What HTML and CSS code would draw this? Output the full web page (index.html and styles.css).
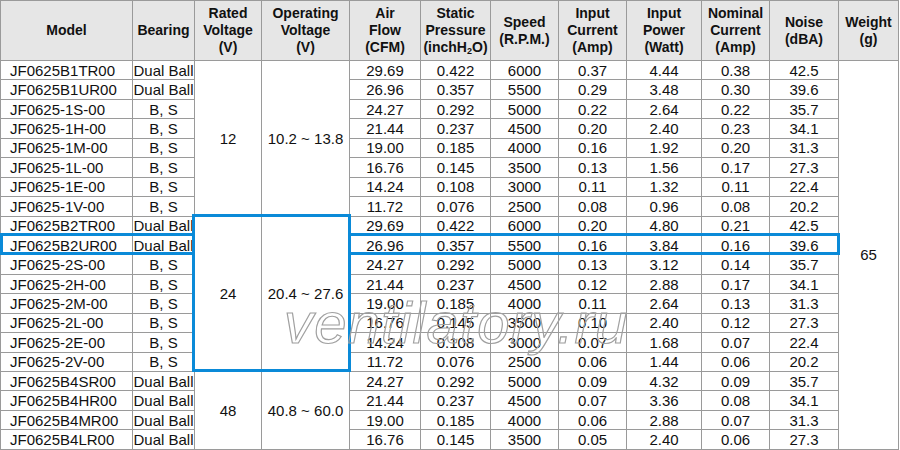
FILE: index.html
```html
<!DOCTYPE html>
<html>
<head>
<meta charset="utf-8">
<link rel="stylesheet" href="styles.css">
</head>
<body>
<div class="wrap">
<table class="spec">
<colgroup>
<col class="c-model"><col class="c-bear"><col class="c-rv"><col class="c-ov"><col class="c-af"><col class="c-sp"><col class="c-spd"><col class="c-ic"><col class="c-ip"><col class="c-nc"><col class="c-noise"><col class="c-w">
</colgroup>
<thead>
<tr>
<th>Model</th>
<th>Bearing</th>
<th>Rated<br>Voltage<br>(V)</th>
<th>Operating<br>Voltage<br>(V)</th>
<th>Air<br>Flow<br>(CFM)</th>
<th>Static<br>Pressure<br>(inchH<sub>2</sub>O)</th>
<th>Speed<br>(R.P.M.)</th>
<th>Input<br>Current<br>(Amp)</th>
<th>Input<br>Power<br>(Watt)</th>
<th>Nominal<br>Current<br>(Amp)</th>
<th>Noise<br>(dBA)</th>
<th>Weight<br>(g)</th>
</tr>
</thead>
<tbody>
<tr><td class="m">JF0625B1TR00</td><td>Dual Ball</td><td rowspan="8">12</td><td rowspan="8">10.2 ~ 13.8</td><td>29.69</td><td>0.422</td><td>6000</td><td>0.37</td><td>4.44</td><td>0.38</td><td>42.5</td><td rowspan="20">65</td></tr>
<tr><td class="m">JF0625B1UR00</td><td>Dual Ball</td><td>26.96</td><td>0.357</td><td>5500</td><td>0.29</td><td>3.48</td><td>0.30</td><td>39.6</td></tr>
<tr><td class="m">JF0625-1S-00</td><td>B, S</td><td>24.27</td><td>0.292</td><td>5000</td><td>0.22</td><td>2.64</td><td>0.22</td><td>35.7</td></tr>
<tr><td class="m">JF0625-1H-00</td><td>B, S</td><td>21.44</td><td>0.237</td><td>4500</td><td>0.20</td><td>2.40</td><td>0.23</td><td>34.1</td></tr>
<tr><td class="m">JF0625-1M-00</td><td>B, S</td><td>19.00</td><td>0.185</td><td>4000</td><td>0.16</td><td>1.92</td><td>0.20</td><td>31.3</td></tr>
<tr><td class="m">JF0625-1L-00</td><td>B, S</td><td>16.76</td><td>0.145</td><td>3500</td><td>0.13</td><td>1.56</td><td>0.17</td><td>27.3</td></tr>
<tr><td class="m">JF0625-1E-00</td><td>B, S</td><td>14.24</td><td>0.108</td><td>3000</td><td>0.11</td><td>1.32</td><td>0.11</td><td>22.4</td></tr>
<tr><td class="m">JF0625-1V-00</td><td>B, S</td><td>11.72</td><td>0.076</td><td>2500</td><td>0.08</td><td>0.96</td><td>0.08</td><td>20.2</td></tr>
<tr><td class="m">JF0625B2TR00</td><td>Dual Ball</td><td rowspan="8">24</td><td rowspan="8">20.4 ~ 27.6</td><td>29.69</td><td>0.422</td><td>6000</td><td>0.20</td><td>4.80</td><td>0.21</td><td>42.5</td></tr>
<tr><td class="m">JF0625B2UR00</td><td>Dual Ball</td><td>26.96</td><td>0.357</td><td>5500</td><td>0.16</td><td>3.84</td><td>0.16</td><td>39.6</td></tr>
<tr><td class="m">JF0625-2S-00</td><td>B, S</td><td>24.27</td><td>0.292</td><td>5000</td><td>0.13</td><td>3.12</td><td>0.14</td><td>35.7</td></tr>
<tr><td class="m">JF0625-2H-00</td><td>B, S</td><td>21.44</td><td>0.237</td><td>4500</td><td>0.12</td><td>2.88</td><td>0.17</td><td>34.1</td></tr>
<tr><td class="m">JF0625-2M-00</td><td>B, S</td><td>19.00</td><td>0.185</td><td>4000</td><td>0.11</td><td>2.64</td><td>0.13</td><td>31.3</td></tr>
<tr><td class="m">JF0625-2L-00</td><td>B, S</td><td>16.76</td><td>0.145</td><td>3500</td><td>0.10</td><td>2.40</td><td>0.12</td><td>27.3</td></tr>
<tr><td class="m">JF0625-2E-00</td><td>B, S</td><td>14.24</td><td>0.108</td><td>3000</td><td>0.07</td><td>1.68</td><td>0.07</td><td>22.4</td></tr>
<tr><td class="m">JF0625-2V-00</td><td>B, S</td><td>11.72</td><td>0.076</td><td>2500</td><td>0.06</td><td>1.44</td><td>0.06</td><td>20.2</td></tr>
<tr><td class="m">JF0625B4SR00</td><td>Dual Ball</td><td rowspan="4">48</td><td rowspan="4">40.8 ~ 60.0</td><td>24.27</td><td>0.292</td><td>5000</td><td>0.09</td><td>4.32</td><td>0.09</td><td>35.7</td></tr>
<tr><td class="m">JF0625B4HR00</td><td>Dual Ball</td><td>21.44</td><td>0.237</td><td>4500</td><td>0.07</td><td>3.36</td><td>0.08</td><td>34.1</td></tr>
<tr><td class="m">JF0625B4MR00</td><td>Dual Ball</td><td>19.00</td><td>0.185</td><td>4000</td><td>0.06</td><td>2.88</td><td>0.07</td><td>31.3</td></tr>
<tr><td class="m">JF0625B4LR00</td><td>Dual Ball</td><td>16.76</td><td>0.145</td><td>3500</td><td>0.05</td><td>2.40</td><td>0.06</td><td>27.3</td></tr>
</tbody>
</table>
<div class="hl hl-volt"></div>
<div class="hl hl-row-left"></div>
<div class="hl hl-row-right"></div>
<div class="watermark">ventilatory.ru</div>
</div>
</body>
</html>
```
FILE: styles.css
```css
html, body {
  margin: 0;
  padding: 0;
  background: #ffffff;
}
body {
  font-family: "Liberation Sans", Arial, sans-serif;
  color: #111;
}
.wrap {
  position: relative;
  width: 900px;
  height: 450px;
  overflow: hidden;
}
.spec {
  border-collapse: collapse;
  table-layout: fixed;
  width: 898px;
}
.c-model { width: 132px; }
.c-bear { width: 62px; }
.c-rv { width: 67px; }
.c-ov { width: 88px; }
.c-af { width: 71px; }
.c-sp { width: 70px; }
.c-spd { width: 68px; }
.c-ic { width: 68px; }
.c-ip { width: 75px; }
.c-nc { width: 68px; }
.c-noise { width: 69px; }
.c-w { width: 60px; }

.spec th, .spec td {
  border: 1px solid #9a9a9a;
  padding: 0;
  text-align: center;
  vertical-align: middle;
  white-space: nowrap;
  overflow: hidden;
}
.spec thead tr {
  height: 60px;
}
.spec th {
  background: #e6e6e6;
  font-weight: bold;
  font-size: 14px;
  line-height: 17px;
}
.spec th sub {
  font-size: 9px;
  vertical-align: -2px;
  line-height: 0;
}
.spec tbody tr {
  height: 19.45px;
}
.spec td {
  font-size: 15px;
  line-height: 17px;
}
.spec td.m {
  text-align: left;
  padding-left: 9px;
}

.hl {
  position: absolute;
  box-sizing: border-box;
  border: 3px solid #0a8ad8;
}
.hl-volt {
  left: 192px;
  top: 214px;
  width: 159px;
  height: 158px;
}
.hl-row-left {
  left: 0;
  top: 233px;
  width: 195px;
  height: 22px;
  border-right: none;
}
.hl-row-right {
  left: 348px;
  top: 233px;
  width: 492px;
  height: 22px;
  border-left: none;
}
.watermark {
  position: absolute;
  left: 284px;
  top: 294px;
  font-family: "Liberation Sans", Arial, sans-serif;
  font-style: italic;
  font-size: 58px;
  line-height: 57px;
  letter-spacing: 1.2px;
  color: transparent;
  -webkit-text-stroke: 1.2px #a0a0a0;
  white-space: nowrap;
  pointer-events: none;
}
```
